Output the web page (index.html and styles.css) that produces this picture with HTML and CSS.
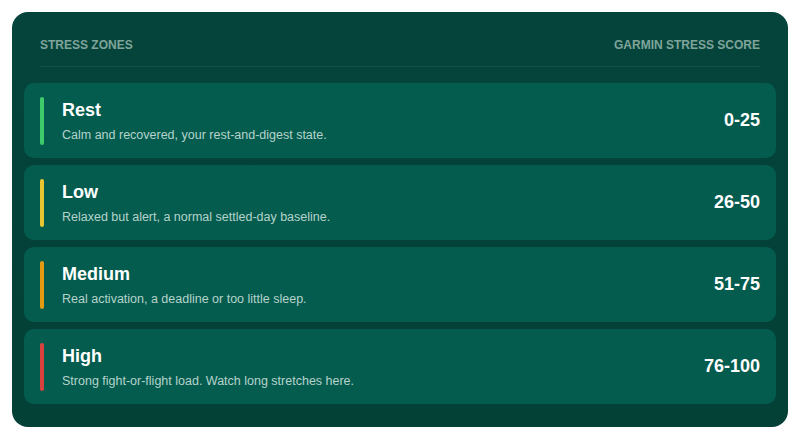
FILE: index.html
```html
<!DOCTYPE html>
<html lang="en">
  <head>
    <meta charset="UTF-8" />
    <meta name="viewport" content="width=device-width, initial-scale=1.0" />
    <title>Stress Zones</title>
    <link rel="stylesheet" href="styles.css">
  </head>
  <body>
    <div class="card">
      <div class="card-head">
        <span>Stress zones</span>
        <span>Garmin stress score</span>
      </div>
      <div class="zones">
        <!-- Rest -->
        <div class="zone">
          <span class="bar rest"></span>
          <div class="zone-text">
            <div class="zone-name">Rest</div>
            <div class="zone-desc">Calm and recovered, your rest-and-digest state.</div>
          </div>
          <div class="zone-range">0-25</div>
        </div>
        <!-- Low -->
        <div class="zone">
          <span class="bar low"></span>
          <div class="zone-text">
            <div class="zone-name">Low</div>
            <div class="zone-desc">Relaxed but alert, a normal settled-day baseline.</div>
          </div>
          <div class="zone-range">26-50</div>
        </div>
        <!-- Medium -->
        <div class="zone">
          <span class="bar medium"></span>
          <div class="zone-text">
            <div class="zone-name">Medium</div>
            <div class="zone-desc">Real activation, a deadline or too little sleep.</div>
          </div>
          <div class="zone-range">51-75</div>
        </div>
        <!-- High -->
        <div class="zone">
          <span class="bar high"></span>
          <div class="zone-text">
            <div class="zone-name">High</div>
            <div class="zone-desc">Strong fight-or-flight load. Watch long stretches here.</div>
          </div>
          <div class="zone-range">76-100</div>
        </div>
      </div>
    </div>
  </body>
</html>
```

FILE: styles.css
```css
body {
  margin: 0;
  padding: 12px;
  background-color: #ffffff;
  font-family: "Liberation Sans", Arial, sans-serif;
}

.card {
  width: 776px;
  box-sizing: border-box;
  padding: 26px 12px 23px;
  border-radius: 16px;
  background: linear-gradient(180deg, #04443b 0%, #034036 100%);
}

.card-head {
  display: flex;
  justify-content: space-between;
  margin: 0 16px;
  padding-bottom: 14px;
  border-bottom: 1px solid #0e5347;
  font-size: 12px;
  line-height: 14px;
  font-weight: bold;
  text-transform: uppercase;
  color: #7fa59a;
}

.zones {
  display: flex;
  flex-direction: column;
  gap: 7px;
  margin-top: 16px;
}

.zone {
  display: flex;
  align-items: center;
  height: 75px;
  padding: 0 16px;
  border-radius: 10px;
  background-color: #045c4f;
}

.bar {
  width: 4px;
  height: 48px;
  border-radius: 2px;
  margin-right: 18px;
  flex-shrink: 0;
}

.bar.rest { background-color: #3ecb6c; }
.bar.low { background-color: #e9c631; }
.bar.medium { background-color: #e49b12; }
.bar.high { background-color: #d9413f; }

.zone-text {
  flex: 1;
  padding-top: 2px;
}

.zone-name {
  font-size: 18px;
  line-height: 21px;
  font-weight: bold;
  color: #ffffff;
}

.zone-desc {
  margin-top: 6px;
  font-size: 12.5px;
  line-height: 16px;
  color: #b5d3ca;
}

.zone-range {
  font-size: 18px;
  font-weight: bold;
  color: #ffffff;
}
```
